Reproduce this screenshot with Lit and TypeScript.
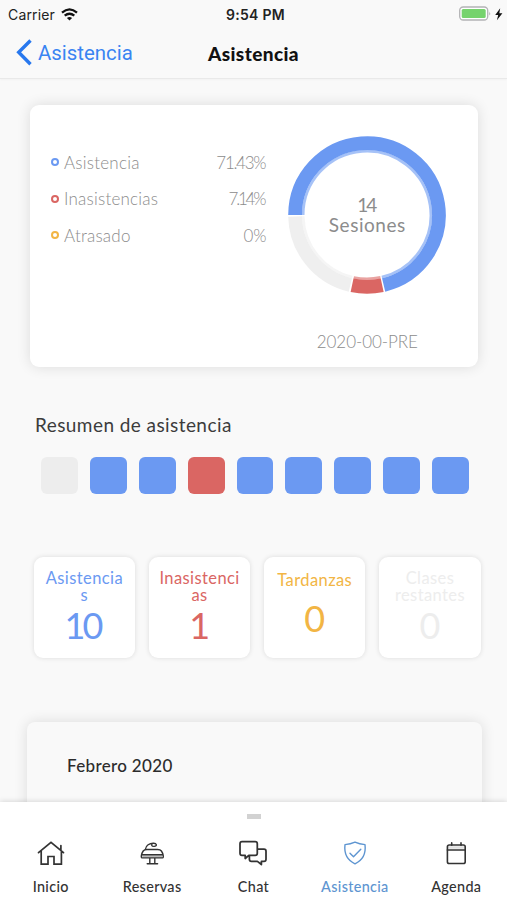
import { LitElement, html, svg, css } from "lit";
import { customElement, property } from "lit/decorators.js";

const CX = 80;
const CY = 80;

function arc(r: number, from: number, to: number): string {
  const p = (deg: number) => {
    const a = (deg * Math.PI) / 180;
    return `${(CX + r * Math.cos(a)).toFixed(2)} ${(CY + r * Math.sin(a)).toFixed(2)}`;
  };
  return `M${p(from)}A${r} ${r} 0 ${to - from > 180 ? 1 : 0} 1 ${p(to)}`;
}

@customElement("status-bar")
class StatusBar extends LitElement {
  static styles = css`
    :host { display: flex; height: 28px; align-items: center; justify-content: space-between; padding: 0 4px 0 8px; box-sizing: border-box; font-family: Inter, sans-serif; color: #222; }
    .side { display: flex; align-items: center; width: 110px; gap: 6px; }
    .right { justify-content: flex-end; gap: 3px; }
    .carrier { font-size: 14px; letter-spacing: 0.15px; }
    .time { font-weight: 600; font-size: 14px; letter-spacing: 0.3px; }
    svg { display: block; }
  `;
  render() {
    return html`
      <div class="side"><span class="carrier">Carrier</span>
        <svg width="17" height="13" viewBox="0 0 17 13" fill="none" stroke="#111" stroke-width="2.3">
          <path d="M1 4.6Q8.5 -1.8 16 4.6" /><path d="M3.7 7.7Q8.5 3.7 13.3 7.7" />
          <path d="M8.5 12.6L5.9 9.9Q8.5 7.9 11.1 9.9Z" fill="#111" stroke="none" />
        </svg>
      </div>
      <span class="time">9:54 PM</span>
      <div class="side right">
        <svg width="33" height="16" viewBox="0 0 33 16">
          <rect x="0.7" y="1" width="28" height="13" rx="3.5" fill="#fff" stroke="#b3b3b5" stroke-width="1.3" />
          <rect x="2.7" y="3" width="24" height="9" rx="1.5" fill="#76d36d" />
          <path d="M30.3 5.5Q32 7.5 30.3 9.5Z" fill="#aaa" />
        </svg>
        <svg width="8" height="13" viewBox="0 0 8 13"><path d="M5.2 .2L.2 6.9H3.2L1.9 12.2 7.4 5.2H4.3Z" fill="#111" /></svg>
      </div>`;
  }
}

@customElement("attendance-donut")
class AttendanceDonut extends LitElement {
  static styles = css`
    :host { display: grid; width: 160px; height: 160px; place-items: center; }
    svg, .label { grid-area: 1 / 1; }
    .label { font-size: 19px; line-height: 20px; text-align: center; color: #8c8c8c; letter-spacing: 0.55px; margin-bottom: 1px; }
    .count { letter-spacing: -2px; margin-right: 2px; }
  `;
  render() {
    const parts = [
      { from: 180, to: 436.6, color: "#6b99f2" },
      { from: 77.8, to: 102, color: "#da6663" },
      { from: 103.4, to: 178.8, color: "#efefef" },
    ];
    return html`
      <svg width="160" height="160" viewBox="0 0 160 160" fill="none">
        ${parts.map((s) => svg`
          <path d=${arc(71.9, s.from, s.to)} stroke=${s.color} stroke-width="13.8" />
          <path d=${arc(63.8, s.from, s.to)} stroke=${s.color} stroke-width="2.6" opacity="0.6" />`)}
      </svg>
      <div class="label"><span class="count">14</span><br />Sesiones</div>`;
  }
}

@customElement("tab-icon")
class TabIcon extends LitElement {
  @property() name = "";
  static styles = css`
    :host { display: block; width: 30px; height: 28px; }
    svg { display: block; fill: none; stroke: currentColor; stroke-width: 1.6; stroke-linejoin: round; stroke-linecap: round; }
  `;
  render() {
    const shapes: Record<string, unknown> = {
      home: svg`<path d="M2.5 13.6L15 3.4 27.5 13.6M5.2 12V25.2H12V17.5H18V25.2H25.4V12M24.9 6.5V11" stroke-linejoin="miter" stroke-width="1.7" />`,
      bell: svg`<path d="M5.2 16.3H25.2V18.6H5.2Z" fill="#bbb" stroke="none" /><path d="M5 18.9C3.6 18.9 4.4 14.6 6.2 12C7 10.9 8.4 10.5 10 10.5H20.6C22.2 10.5 23.6 10.9 24.4 12C26.2 14.6 27 18.9 25.6 18.9ZM5.4 15.7H25.2M12.8 19V24.4M17.8 19V24.4M10.2 24.7H20.6" stroke-width="1.4" /><path d="M8.4 10.4C8.8 6.5 12.6 4.4 16.2 4.2C19.8 4 20.6 7.2 17.2 7.4C14.4 7.5 14 5.6 15.8 4.4" stroke-width="1.4" />`,
      chat: svg`<path d="M4 2.6H17.2Q19.3 2.6 19.3 4.7V14.2Q19.3 16.3 17.2 16.3H10.8L7.2 19.5V16.3H4Q2 16.3 2 14.2V4.7Q2 2.6 4 2.6ZM19.5 10.2H26Q28 10.2 28 12.2V20.3Q28 22.4 26 22.4H23.4V25.5L19.4 22.4H13.4Q11.4 22.4 11.4 20.3V16.5" stroke-width="1.75" />`,
      shield: svg`<path d="M15 3.2C18 4.6 21.5 5.4 25 5.6C26 14 23 21 15 24.8C7 21 4 14 5 5.6C8.5 5.4 12 4.6 15 3.2ZM10 14.3L13.5 17.7 20.8 10.2" stroke-width="1.4" />`,
      calendar: svg`<rect x="6.4" y="6" width="17.8" height="18.5" rx="1.8" /><path d="M6.4 11H24.2M10.7 3.9V6.3M20 3.9V6.3" /><path d="M7.6 8.5H23" stroke-width="2.4" opacity="0.15" />`,
    };
    return html`<svg width="30" height="28" viewBox="0 0 30 28">${shapes[this.name]}</svg>`;
  }
}

@customElement("app-root")
class AppRoot extends LitElement {
  static styles = css`
    :host { display: flex; flex-direction: column; height: 900px; overflow: hidden; background: #f9f9f9; font-family: Lato, "Liberation Sans", sans-serif; color: #3c3c3c; }
    * { box-sizing: border-box; }
    .nav { flex: none; height: 51px; display: grid; grid-template-columns: 1fr auto 1fr; align-items: center; padding: 0 16px; border-bottom: 1px solid #e9e9e9; box-shadow: 0 1px 2px rgba(0, 0, 0, 0.03); }
    .back { display: flex; align-items: center; gap: 6px; color: #3a84f2; font-family: Roboto, sans-serif; font-size: 20.4px; }
    .back svg { display: block; margin-top: -1px; }
    .back span { margin-top: -1px; }
    .title { font-size: 19px; font-weight: 900; color: #111; letter-spacing: 0.4px; }
    main { flex: 1; min-height: 0; overflow: hidden; }
    .summary { margin: 26px 29.5px 0 30px; height: 262px; border-radius: 9px; background: #fff; box-shadow: 0 0 14px rgba(0, 0, 0, 0.12); display: flex; justify-content: space-between; padding: 30px 30.2px 0 21px; }
    .legend { width: 215.5px; padding-top: 9px; color: #8c8c8c; font-weight: 300; font-size: 17px; letter-spacing: 0.22px; }
    .row { height: 36.6px; display: flex; align-items: center; }
    .dot { width: 8px; height: 8px; border-radius: 50%; border: 2.5px solid; margin-right: 5px; }
    .blue { color: #6b99f2; } .red { color: #da6663; } .amber { color: #f2b544; } .gray { color: #ededed; }
    .value { margin-left: auto; letter-spacing: 0; }
    .value.blue-v { letter-spacing: -1.3px; margin-right: 1.3px; }
    .value.red-v { letter-spacing: -2.2px; margin-right: 2.2px; }
    .chart { display: flex; flex-direction: column; align-items: center; width: 160px; }
    .code { margin-top: 36px; color: #8c8c8c; font-weight: 300; font-size: 17px; line-height: 22px; letter-spacing: -0.05px; white-space: nowrap; }
    .heading { margin: 45px 0 0 35px; font-size: 19px; line-height: 26px; font-weight: 400; letter-spacing: 0.43px; }
    .squares { display: flex; gap: 12px; margin: 19px 0 0 41px; }
    .sq { width: 36.9px; height: 37px; border-radius: 6px; background: currentColor; }
    .cards { display: flex; gap: 13.8px; margin: 63px 0 0 33.7px; }
    .card { width: 101.4px; height: 101px; border-radius: 9px; background: #fff; box-shadow: 0 0 5px rgba(0, 0, 0, 0.12); text-align: center; padding: 12.5px 4px 0; }
    .card.short { padding-top: 14.5px; }
    .name { font-size: 16.5px; line-height: 17px; letter-spacing: 0.4px; }
    .num { font-size: 36px; line-height: 42px; }
    .num.ten { letter-spacing: -3px; margin-right: 4px; }
    .card.short .num { margin-top: 8px; }
    .month { margin: 64px 25.5px 0 27px; height: 200px; border-radius: 8px; background: #f9f9f9; box-shadow: 0 0 14px rgba(0, 0, 0, 0.12); padding: 32px 0 0 40px; font-size: 17px; line-height: 24px; color: #2c2c2c; font-weight: 500; letter-spacing: 0.33px; }
    .tabs { flex: none; position: relative; height: 98px; background: #fff; box-shadow: 0 -1px 5px rgba(0, 0, 0, 0.13); }
    .grip { width: 14px; height: 5px; background: #d2d2d2; margin: 12px auto 0; }
    .items { display: grid; grid-template-columns: repeat(5, 1fr); margin-top: 20px; }
    .tab { display: flex; flex-direction: column; align-items: center; color: #333; font-size: 14.4px; line-height: 20px; font-weight: 500; letter-spacing: 0.33px; }
    .tab tab-icon { margin-bottom: 10px; }
    .tab.on { color: #5e95d1; }
  `;

  render() {
    const legend = [["blue", "Asistencia", "71.43%"], ["red", "Inasistencias", "7.14%"], ["amber", "Atrasado", "0%"]];
    const squares = ["gray", "blue", "blue", "red", "blue", "blue", "blue", "blue", "blue"];
    const tabs = [["home", "Inicio"], ["bell", "Reservas"], ["chat", "Chat"], ["shield", "Asistencia"], ["calendar", "Agenda"]];
    return html`
      <status-bar></status-bar>
      <div class="nav">
        <div class="back">
          <svg width="16" height="27" viewBox="0 0 16 27" fill="none" stroke="#2878ee" stroke-width="3.4"><path d="M14.5 1.5L2.7 13.3 14.5 25.2" /></svg>
          <span>Asistencia</span>
        </div>
        <div class="title">Asistencia</div>
      </div>
      <main>
        <section class="summary">
          <div class="legend">
            ${legend.map(([c, l, v]) => html`<div class="row"><i class="dot ${c}"></i><span>${l}</span><span class="value ${c}-v">${v}</span></div>`)}
          </div>
          <div class="chart"><attendance-donut></attendance-donut><div class="code">2020-00-PRE</div></div>
        </section>
        <div class="heading">Resumen de asistencia</div>
        <div class="squares">${squares.map((c) => html`<div class="sq ${c}"></div>`)}</div>
        <div class="cards">
          <div class="card blue"><div class="name">Asistencia<br />s</div><div class="num ten">10</div></div>
          <div class="card red"><div class="name">Inasistenci<br />as</div><div class="num">1</div></div>
          <div class="card amber short"><div class="name">Tardanzas</div><div class="num">0</div></div>
          <div class="card gray"><div class="name">Clases<br />restantes</div><div class="num">0</div></div>
        </div>
        <section class="month">Febrero 2020</section>
      </main>
      <nav class="tabs">
        <div class="grip"></div>
        <div class="items">
          ${tabs.map(([i, l]) => html`<div class="tab ${l === "Asistencia" ? "on" : ""}"><tab-icon name=${i}></tab-icon><span>${l}</span></div>`)}
        </div>
      </nav>`;
  }
}
